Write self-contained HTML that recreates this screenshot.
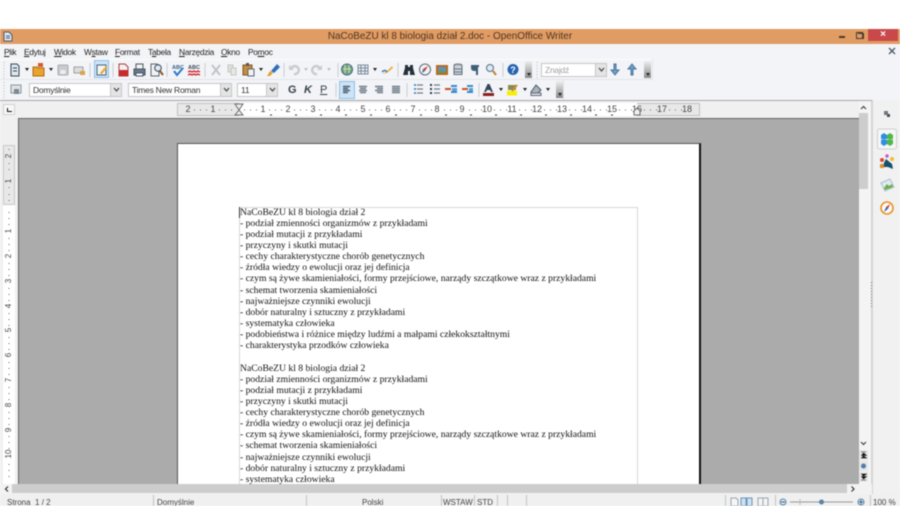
<!DOCTYPE html>
<html lang="pl"><head><meta charset="utf-8"><title>OpenOffice Writer</title>
<style>
html,body{margin:0;padding:0;background:#fff}
#a{position:relative;width:900px;height:506px;overflow:hidden;background:#fff;font:9px "Liberation Sans",sans-serif;color:#333;filter:blur(.45px)}
#a div,#a span,#a svg{position:absolute}
.m{top:47px;font-size:8.4px;letter-spacing:-.3px;line-height:10px;color:#222;white-space:nowrap}
.m u{text-decoration:underline}
.c{background:#fff;border:1px solid #c6c6c6;box-sizing:border-box;font-size:8.5px;letter-spacing:-.25px;line-height:12px;padding-left:3px;color:#333}
.b{background:#e4e4e4;width:11px;border-left:1px solid #c6c6c6;top:0;bottom:0;right:0;box-sizing:border-box}
.d{width:0;height:0;border:2px solid transparent;border-top:3px solid #222;border-bottom:0}
.r{top:104px;width:12px;text-align:center;font-size:9px;line-height:11px;color:#444}
.v{left:3px;width:12px;height:12px;text-align:center;font-size:8px;line-height:12px;color:#444;transform:rotate(-90deg)}
.t{left:240px;font:9.64px/11px "Liberation Serif",serif;color:#111;white-space:nowrap}
.st{top:498px;font-size:8px;line-height:10px;color:#444;white-space:nowrap}
.ss{top:495px;height:11px;width:1px;background:#c4c4c4}
</style></head><body><div id="a">

<div style="left:0;top:29px;width:900px;height:15px;background:#e09c63"></div>
<svg style="left:3px;top:31px" width="10" height="11" viewBox="0 0 10 11"><path d="M1 1h5l3 3v6H1z" fill="#dfe6ee" stroke="#4a5a6c"/><path d="M3 5h4M3 7h4" stroke="#4a5a6c"/></svg>
<div style="left:200px;width:500px;top:30px;text-align:center;font-size:9.95px;line-height:14px;color:#4e3626">NaCoBeZU kl 8 biologia dział 2.doc - OpenOffice Writer</div>
<div style="left:839px;top:36px;width:6px;height:2px;background:#4a3a2e"></div>
<div style="left:856px;top:32px;width:5px;height:5px;border:1px solid #4a3a2e"></div>
<div style="left:858px;top:33px;width:5px;height:5px;border:1px solid #4a3a2e;border-left:0;border-bottom:0"></div>
<div style="left:868px;top:29px;width:30px;height:12px;background:#c9494b"></div>
<div style="left:868px;top:29px;width:30px;text-align:center;font-size:10px;line-height:12px;color:#fff;font-weight:bold">×</div>

<div style="left:0;top:44px;width:900px;height:56px;background:#f3f4f7"></div>
<div style="left:0;top:59px;width:652px;height:1px;background:#fafbfc"></div>
<div style="left:0;top:79px;width:653px;height:1px;background:#e2e4e8"></div>
<div style="left:652px;top:59px;width:1px;height:21px;background:#e2e4e8"></div>
<div style="left:563px;top:80px;width:1px;height:20px;background:#e2e4e8"></div>
<div class="m" style="left:4px"><u>P</u>lik</div>
<div class="m" style="left:24px"><u>E</u>dytuj</div>
<div class="m" style="left:54px"><u>W</u>idok</div>
<div class="m" style="left:84px">W<u>s</u>taw</div>
<div class="m" style="left:115px"><u>F</u>ormat</div>
<div class="m" style="left:148px">T<u>a</u>bela</div>
<div class="m" style="left:179px"><u>N</u>arzędzia</div>
<div class="m" style="left:221px"><u>O</u>kno</div>
<div class="m" style="left:248px">Po<u>m</u>oc</div>
<svg style="left:888px;top:47px" width="8" height="8" viewBox="0 0 8 8"><path d="M1 1l6 6M7 1L1 7" stroke="#4c5a68" stroke-width="1.3"/></svg>

<!-- toolbar 1 -->
<div style="left:94px;top:60px;width:15px;height:18px;background:#cde4f7;border:1px solid #8fc0ea;box-sizing:border-box"></div>
<svg style="left:0;top:59px" width="660" height="21" viewBox="0 59 660 21">
<path d="M4 62v16" stroke="#bbb" stroke-dasharray="1 2"/>
<path d="M11 64h6l2 2v10h-8z" fill="#dfe6ec" stroke="#34465a"/><path d="M13 68h4M13 71h4" stroke="#34465a"/>
<path d="M25 68h4l-2 3z" fill="#222"/>
<path d="M33 67h4l1 1h6v8H33z" fill="#e8a52e" stroke="#b06a14"/><path d="M38 63h5v4h-5z" fill="#d95a2a"/>
<path d="M49 68h4l-2 3z" fill="#222"/>
<rect x="58" y="65" width="10" height="10" rx="1" fill="#c8ccd0" stroke="#a8acb0"/><rect x="60.500" y="70" width="5" height="4" fill="#eee"/>
<path d="M74 67h9v6h-9z" fill="#dcdcdc" stroke="#a0a0a0"/><path d="M80 71h5v4h-5z" fill="#d9a44a"/>
<path d="M90 63v14" stroke="#c8ccd2"/>
<path d="M97 65h9v10h-9z" fill="#f4f4f0" stroke="#4a5f78"/><path d="M100 73l6-7 1.500 1.500-6 7z" fill="#e6a834"/>
<path d="M113 63v14" stroke="#c8ccd2"/>
<path d="M119 64h6l3 3v9h-9z" fill="#f4f0f0" stroke="#a04040"/><rect x="119" y="70" width="9" height="6" fill="#c9282c"/>
<path d="M134 69h11v6h-11z" fill="#68788a" stroke="#44515f"/><path d="M136 64h7v5h-7z" fill="#f2f2f2" stroke="#4b5866"/><path d="M136 73h7v3h-7z" fill="#fff" stroke="#4b5866"/>
<path d="M151 64h6l2 2v10h-8z" fill="#f2f2f2" stroke="#5a6672"/><circle cx="158" cy="68" r="3.300" fill="#dceaf5" stroke="#345"/><path d="M160 71l3 4" stroke="#8a5a2a" stroke-width="2"/>
<path d="M167 63v14" stroke="#c8ccd2"/>
<text x="172" y="69" font-size="5.500" font-weight="700" fill="#3b5f86" font-family="Liberation Sans">ABC</text><path d="M174 71l3 4 6-7" fill="none" stroke="#2b7ec8" stroke-width="2"/>
<text x="188" y="69" font-size="5.500" font-weight="700" fill="#3b4a5a" font-family="Liberation Sans">ABC</text><path d="M188 72l2-1 2 1 2-1 2 1 2-1 2 1M188 75l2-1 2 1 2-1 2 1 2-1 2 1" fill="none" stroke="#d3282c" stroke-width="1.300"/>
<path d="M205 63v14" stroke="#c8ccd2"/>
<path d="M212 65l8 10M220 65l-8 10" stroke="#c0c4c8" stroke-width="2"/>
<path d="M228 65h5v7h-5z" fill="#e0e0dc" stroke="#c4c4c0"/><path d="M231 68h5v7h-5z" fill="#e8e8e4" stroke="#c4c4c0"/>
<path d="M243 65h9v10h-9z" fill="#c88c3a" stroke="#7a5a2a"/><path d="M246 63h3v3h-3z" fill="#556"/><path d="M248 69h6v7h-6z" fill="#f2f2f2" stroke="#5a6672"/>
<path d="M259 68h4l-2 3z" fill="#222"/>
<path d="M267 76l3-5 3 2-3 3z" fill="#e8a030"/><path d="M271 71l6-7 3 3-6 6z" fill="#2e70b8"/>
<path d="M284 63v14" stroke="#c8ccd2"/>
<path d="M291 69a4 4 0 1 1 3 5" fill="none" stroke="#c8ccd0" stroke-width="2.500"/><path d="M289 65v5h5z" fill="#c8ccd0"/>
<path d="M304 68h4l-2 3z" fill="#c0c0c0"/>
<path d="M320 69a4 4 0 1 0-3 5" fill="none" stroke="#c8ccd0" stroke-width="2.500"/><path d="M322 65v5h-5z" fill="#c8ccd0"/>
<path d="M327 68h4l-2 3z" fill="#c0c0c0"/>
<path d="M338 63v14" stroke="#c8ccd2"/>
<circle cx="347" cy="69.500" r="5.500" fill="#72a67e" stroke="#3f6f8c"/><path d="M343 69h8M345 65v8M349 65v8" stroke="#d8d8b8"/>
<rect x="358" y="65" width="10" height="9" fill="#e8edf2" stroke="#7c8c9c"/><path d="M358 68h10M358 71h10M361 65v9M365 65v9" stroke="#7c8c9c"/>
<path d="M373 68h4l-2 3z" fill="#222"/>
<path d="M382 74l4-2 6-6 1 2-6 5z" fill="#e8b04a"/><path d="M382 72q3-3 5 0" fill="none" stroke="#3a7abf" stroke-width="1.500"/>
<path d="M398 63v14" stroke="#c8ccd2"/>
<path d="M405 65h3v2h2v-2h3v3l2 7h-5v-4h-2v4h-5l2-7z" fill="#26303a"/>
<circle cx="425" cy="69.500" r="5.500" fill="#f2f2f2" stroke="#5a6a78"/><path d="M428 66l-5 3 2 2z" fill="#d3382c"/><path d="M422 73l1-4 2 2z" fill="#2e70b8"/>
<rect x="436" y="65" width="12" height="10" fill="#b96a22"/><rect x="438" y="67" width="8" height="6" fill="#5a94b8"/><path d="M438 73l3-3 2 2 3-1v2z" fill="#6a9a3a"/>
<ellipse cx="458" cy="65.500" rx="4" ry="1.500" fill="#bbb" stroke="#607080"/><path d="M454 66v8.500h8V66" fill="#cfd3d8" stroke="#607080"/><path d="M454 69h8M454 72h8" stroke="#607080"/>
<path d="M471 65h8v2h-1v8h-2v-4h-1q-4 0-4-3 0-3 0-3z" fill="#3d6078"/>
<circle cx="490" cy="68" r="3.500" fill="#dceaf5" stroke="#5a7080"/><path d="M493 71l3 4" stroke="#b8863a" stroke-width="2"/>
<path d="M503 63v14" stroke="#c8ccd2"/>
<circle cx="513" cy="69.500" r="5.500" fill="#2762b0"/>
<text x="513" y="73" font-size="9" font-weight="700" fill="#fff" text-anchor="middle" font-family="Liberation Sans">?</text>
<path d="M537 62v16" stroke="#bbb" stroke-dasharray="1 2"/>
<path d="M614 64v6h-3l4 5 4-5h-3v-6z" fill="#6ea0c8" stroke="#47759c"/>
<path d="M631 75v-6h-3l4-5 4 5h-3v6z" fill="#6ea0c8" stroke="#47759c"/>
</svg>
<div style="left:525px;top:61px;width:7px;height:17px;background:linear-gradient(#eceef0,#8a8a8a)"></div>
<div class="d" style="left:527px;top:73px"></div>
<div style="left:644px;top:61px;width:7px;height:17px;background:linear-gradient(#eceef0,#8a8a8a)"></div>
<div class="d" style="left:646px;top:73px"></div>
<div class="c" style="left:541px;top:63px;width:66px;height:14px;color:#a0a0a0">Znajdź<div class="b"><svg style="left:2px;top:3px" width="7" height="6"><path d="M1 1l2.500 3L6 1" fill="none" stroke="#444" stroke-width="1.200"/></svg></div></div>

<!-- toolbar 2 -->
<div style="left:339px;top:81px;width:16px;height:18px;background:#cde4f7;border:1px solid #8fc0ea;box-sizing:border-box"></div>
<div class="c" style="left:29px;top:83px;width:93px;height:14px">Domyślnie<div class="b"><svg style="left:2px;top:3px" width="7" height="6"><path d="M1 1l2.500 3L6 1" fill="none" stroke="#444" stroke-width="1.200"/></svg></div></div>
<div class="c" style="left:128px;top:83px;width:104px;height:14px">Times New Roman<div class="b"><svg style="left:2px;top:3px" width="7" height="6"><path d="M1 1l2.500 3L6 1" fill="none" stroke="#444" stroke-width="1.200"/></svg></div></div>
<div class="c" style="left:237px;top:83px;width:41px;height:14px">11<div class="b"><svg style="left:2px;top:3px" width="7" height="6"><path d="M1 1l2.500 3L6 1" fill="none" stroke="#444" stroke-width="1.200"/></svg></div></div>
<div style="left:288px;top:84px;font-size:11px;line-height:12px;font-weight:700;color:#36414c">G</div>
<div style="left:304px;top:84px;font-size:11px;line-height:12px;font-weight:700;font-style:italic;color:#36414c">K</div>
<div style="left:320px;top:84px;font-size:11px;line-height:12px;color:#36414c;text-decoration:underline">P</div>
<svg style="left:0;top:80px" width="570" height="20" viewBox="0 80 570 20">
<path d="M4 82v16" stroke="#bbb" stroke-dasharray="1 2"/>
<rect x="11" y="85" width="10" height="8" fill="#dfe3e6" stroke="#88949e"/><rect x="14" y="89" width="5" height="5" fill="#7c8a90"/>
<path d="M336 83v14M407 83v14M479 83v14" stroke="#c8ccd2"/>
<path d="M343 86.500h7M343 88.500h5M343 90.500h7M343 92.500h5" stroke="#4d6070" stroke-width="1.500"/>
<path d="M359 86.500h8M360 88.500h6M359 90.500h8M360 92.500h6" stroke="#707c88" stroke-width="1.500"/>
<path d="M375 86.500h8M377 88.500h6M375 90.500h8M377 92.500h6" stroke="#707c88" stroke-width="1.500"/>
<path d="M392 86.500h8M392 88.500h8M392 90.500h8M392 92.500h8" stroke="#707c88" stroke-width="1.500"/>
<path d="M414 85h2M414 89h2M414 93h2" stroke="#2e70b8" stroke-width="1.600"/><path d="M417 85h6M417 89h6M417 93h6" stroke="#707c88" stroke-width="1.200"/>
<path d="M430 85h2M430 89h2M430 93h2" stroke="#2c3a48" stroke-width="2"/><path d="M434 85h6M434 89h6M434 93h6" stroke="#707c88" stroke-width="1.200"/>
<path d="M451 86h6M451 92h6" stroke="#3a8ac8" stroke-width="2"/><path d="M445 89h6" stroke="#c8502c" stroke-width="2"/><path d="M452 88h5v3h-5z" fill="#5aa0d8"/>
<path d="M467 86h6M467 92h6" stroke="#3a8ac8" stroke-width="2"/><path d="M462 89h6" stroke="#c8502c" stroke-width="2"/><path d="M469 88h4v3h-4z" fill="#5aa0d8"/>
<path d="M484 92l3.500-8h2l3.500 8h-2l-1-2h-3l-1 2z" fill="#33465c"/><rect x="483" y="93" width="11" height="3" fill="#8e1f1f"/>
<path d="M499 88h4l-2 3z" fill="#222"/>
<rect x="507" y="91" width="10" height="4.500" fill="#f4f000"/><path d="M508 85h8v5h-8z" fill="#8a8a50"/><path d="M512 91l5-6" stroke="#c88a30" stroke-width="2"/>
<path d="M523 88h4l-2 3z" fill="#222"/>
<path d="M531 92l5-7 5 5-3 3h-6z" fill="#a8b4bc" stroke="#4a5a68"/><rect x="531" y="93" width="10" height="2.500" fill="#dde2e6" stroke="#667"/>
<path d="M546 88h4l-2 3z" fill="#222"/>
</svg>
<div style="left:556px;top:81px;width:7px;height:17px;background:linear-gradient(#eceef0,#8a8a8a)"></div>
<div class="d" style="left:558px;top:93px"></div>

<!-- ruler region -->
<div style="left:0;top:100px;width:872px;height:384px;background:#f0f0f0;border-top:1px solid #a8a8a8;box-sizing:border-box"></div>
<div style="left:3px;top:104px;width:12px;height:11px;background:#f8f8f8;border:1px solid #d0d0d0;box-sizing:border-box"></div>
<div style="left:7px;top:108px;width:4px;height:3px;border-left:1px solid #111;border-bottom:1px solid #111"></div>
<div style="left:177px;top:103px;width:523px;height:13px;background:#e8e8e8;border:1px solid #c0c0c0;box-sizing:border-box"></div>
<div style="left:239px;top:103px;width:398px;height:13px;background:#fff"></div>
<div class="r" style="left:182px">2</div><div class="r" style="left:207px">1</div><div class="r" style="left:257px">1</div><div class="r" style="left:282px">2</div><div class="r" style="left:307px">3</div><div class="r" style="left:332px">4</div><div class="r" style="left:357px">5</div><div class="r" style="left:382px">6</div><div class="r" style="left:407px">7</div><div class="r" style="left:431px">8</div><div class="r" style="left:456px">9</div><div class="r" style="left:481px">10</div><div class="r" style="left:506px">11</div><div class="r" style="left:531px">12</div><div class="r" style="left:556px">13</div><div class="r" style="left:581px">14</div><div class="r" style="left:606px">15</div><div class="r" style="left:631px">16</div><div class="r" style="left:656px">17</div><div class="r" style="left:681px">18</div>
<svg style="left:177px;top:103px" width="523" height="14" viewBox="177 103 523 14">
<path d="M194 110h1M200 110h1M206 110h1M219 110h1M225 110h1M231 110h1M244 110h1M250 110h1M256 110h1M269 110h1M275 110h1M281 110h1M294 110h1M300 110h1M306 110h1M319 110h1M325 110h1M331 110h1M344 110h1M350 110h1M356 110h1M369 110h1M375 110h1M381 110h1M394 110h1M400 110h1M406 110h1M419 110h1M425 110h1M431 110h1M444 110h1M450 110h1M456 110h1M469 110h1M475 110h1M481 110h1M494 110h1M500 110h1M506 110h1M519 110h1M525 110h1M531 110h1M544 110h1M550 110h1M556 110h1M569 110h1M575 110h1M581 110h1M594 110h1M600 110h1M606 110h1M619 110h1M625 110h1M631 110h1M644 110h1M650 110h1M656 110h1M669 110h1M675 110h1M681 110h1" stroke="#666"/>
<path d="M270 115h2M295 115h2M320 115h2M345 115h2M370 115h2M395 115h2M420 115h2M445 115h2M470 115h2M495 115h2M520 115h2M545 115h2M570 115h2M595 115h2M611 115h2" stroke="#333"/>
<path d="M235 104h8l-4 6zM235 115h8l-4-5z" fill="#eee" stroke="#6c6c6c"/>
<path d="M634 115v-4l3-3 3 3v4z" fill="#f0f0f0" stroke="#6c6c6c"/>
</svg>

<!-- vertical ruler -->
<div style="left:3px;top:145px;width:12px;height:60px;background:#e8e8e8;border:1px solid #c8c8c8;box-sizing:border-box"></div>
<div style="left:3px;top:205px;width:12px;height:279px;background:#fff"></div>
<div class="v" style="top:150px">2</div><div class="v" style="top:175px">1</div><div class="v" style="top:225px">1</div><div class="v" style="top:250px">2</div><div class="v" style="top:275px">3</div><div class="v" style="top:300px">4</div><div class="v" style="top:324px">5</div><div class="v" style="top:349px">6</div><div class="v" style="top:374px">7</div><div class="v" style="top:399px">8</div><div class="v" style="top:424px">9</div><div class="v" style="top:448px">10</div>
<svg style="left:3px;top:145px" width="12" height="339" viewBox="3 145 12 339"><path d="M9 149v1M9 163v1M9 169v1M9 187v1M9 194v1M9 200v1M9 212v1M9 218v1M9 224v1M9 238v1M9 244v1M9 250v1M9 263v1M9 269v1M9 275v1M9 288v1M9 294v1M9 300v1M9 313v1M9 319v1M9 325v1M9 337v1M9 343v1M9 349v1M9 362v1M9 368v1M9 374v1M9 387v1M9 393v1M9 399v1M9 412v1M9 418v1M9 424v1M9 436v1M9 442v1M9 448v1M9 464v1M9 470v1M9 476v1" stroke="#666"/></svg>

<!-- doc -->
<div style="left:18px;top:118px;width:841px;height:366px;background:#ababab;border-left:1px solid #666;border-top:1px solid #666;box-sizing:border-box"></div>
<div style="left:177px;top:143px;width:524px;height:341px;background:#fff;border-left:1px solid #555;border-top:1px solid #555;border-right:2px solid #111;box-sizing:border-box"></div>
<div style="left:239px;top:207px;width:399px;height:277px;border:1px solid #d8d8d8;border-bottom:0;box-sizing:border-box"></div>
<div style="left:239px;top:207px;width:1px;height:11px;background:#333"></div>

<div class="t" style="top:207px">NaCoBeZU kl 8 biologia dział 2</div>
<div class="t" style="top:218px">- podział zmienności organizmów z przykładami</div>
<div class="t" style="top:229px">- podział mutacji z przykładami</div>
<div class="t" style="top:240px">- przyczyny i skutki mutacji</div>
<div class="t" style="top:251px">- cechy charakterystyczne chorób genetycznych</div>
<div class="t" style="top:262px">- źródła wiedzy o ewolucji oraz jej definicja</div>
<div class="t" style="top:273px">- czym są żywe skamieniałości, formy przejściowe, narządy szczątkowe wraz z przykładami</div>
<div class="t" style="top:285px">- schemat tworzenia skamieniałości</div>
<div class="t" style="top:296px">- najważniejsze czynniki ewolucji</div>
<div class="t" style="top:307px">- dobór naturalny i sztuczny z przykładami</div>
<div class="t" style="top:318px">- systematyka człowieka</div>
<div class="t" style="top:329px">- podobieństwa i różnice między ludźmi a małpami człekokształtnymi</div>
<div class="t" style="top:340px">- charakterystyka przodków człowieka</div>
<div class="t" style="top:363px">NaCoBeZU kl 8 biologia dział 2</div>
<div class="t" style="top:374px">- podział zmienności organizmów z przykładami</div>
<div class="t" style="top:385px">- podział mutacji z przykładami</div>
<div class="t" style="top:396px">- przyczyny i skutki mutacji</div>
<div class="t" style="top:407px">- cechy charakterystyczne chorób genetycznych</div>
<div class="t" style="top:418px">- źródła wiedzy o ewolucji oraz jej definicja</div>
<div class="t" style="top:429px">- czym są żywe skamieniałości, formy przejściowe, narządy szczątkowe wraz z przykładami</div>
<div class="t" style="top:440px">- schemat tworzenia skamieniałości</div>
<div class="t" style="top:452px">- najważniejsze czynniki ewolucji</div>
<div class="t" style="top:463px">- dobór naturalny i sztuczny z przykładami</div>
<div class="t" style="top:474px;height:10px;overflow:hidden">- systematyka człowieka</div>

<!-- v scrollbar -->
<div style="left:859px;top:101px;width:13px;height:383px;background:#f4f4f4;border-right:1px solid #d4d4d4;box-sizing:border-box"></div>
<div style="left:859px;top:113px;width:9px;height:76px;background:#cdcdcd"></div>
<svg style="left:859px;top:103px" width="12" height="380" viewBox="859 103 12 380">
<path d="M861 109l2.500-2.500 2.500 2.500" fill="none" stroke="#444" stroke-width="1.200"/>
<path d="M861 442l2.500 2.500 2.500-2.500" fill="none" stroke="#444" stroke-width="1.200"/>
<rect x="859" y="450" width="9" height="10" fill="#e6e6e6"/><rect x="859" y="461" width="9" height="10" fill="#e6e6e6"/><rect x="859" y="472" width="9" height="10" fill="#e6e6e6"/>
<path d="M861 452h5M863.500 453l-2 2.500h5zM863.500 456l-2 2h5z" fill="#111" stroke="#111" stroke-width=".6"/>
<circle cx="863.500" cy="466" r="2.500" fill="#4f7fa8"/>
<path d="M861 480h5M863.500 479l-2-2.500h5zM863.500 476l-2-2h5z" fill="#111" stroke="#111" stroke-width=".6"/>
</svg>

<!-- sidebar -->
<div style="left:872px;top:100px;width:28px;height:394px;background:#f1f1f1;border-left:1px solid #d4d4d4;box-sizing:border-box"></div>
<svg style="left:870px;top:280px" width="4" height="30"><path d="M1.500 2v26" stroke="#777" stroke-dasharray="1 2"/></svg>
<svg style="left:873px;top:105px" width="27" height="115" viewBox="873 105 27 115">
<path d="M884 111h4v4h-4z" fill="#707880"/><path d="M887 114h3v3h-3z" fill="#4a5058"/>
<rect x="877.500" y="129" width="19" height="20" rx="2" fill="#f6f6f6" stroke="#cfcfcf"/>
<path d="M881 135l3-2 3 2v4h-6z" fill="#2f8fe0"/><path d="M887 135l3-2 3 2v4h-6z" fill="#4eb848"/><path d="M881 140l3-1 3 1v4l-3 2-3-2z" fill="#2f8fe0"/><path d="M887 140l3-1 3 1v4l-3 2-3-2z" fill="#4eb848"/>
<circle cx="882" cy="160" r="2" fill="#d84a30"/><circle cx="887" cy="156" r="1.700" fill="#c05ad0"/><circle cx="892" cy="159" r="2" fill="#eec030"/>
<path d="M882 167l4-8 6 5 1 5-5-2z" fill="#14506c"/><path d="M880 164h4v4h-4z" fill="#d89030"/>
<path d="M881 183l9-4 4 8-9 4z" fill="#dfeaf2" stroke="#a8c0d0"/><path d="M884 188l3-4 2 2 3-2 1 3-8 3z" fill="#6ab04a"/>
<circle cx="887" cy="208" r="6" fill="#fbfbfb" stroke="#ea9320" stroke-width="1.600"/><path d="M890 204l-4 3 2 2z" fill="#d8382c"/><path d="M884 212l2-5 2 2z" fill="#2e70b8"/>
</svg>

<!-- h scrollbar -->
<div style="left:0;top:484px;width:872px;height:10px;background:#f2f2f2"></div>
<div style="left:12px;top:484px;width:835px;height:9px;background:#cdcdcd"></div>
<svg style="left:3px;top:485px" width="10" height="8"><path d="M5 1.500L2.500 4 5 6.500" fill="none" stroke="#333" stroke-width="1.200"/></svg>
<svg style="left:849px;top:485px" width="10" height="8"><path d="M2.500 1.500L5 4 2.500 6.500" fill="none" stroke="#333" stroke-width="1.200"/></svg>

<!-- status -->
<div style="left:0;top:494px;width:900px;height:12px;background:#f0f0f0"></div>
<div class="st" style="left:7px">Strona&nbsp; 1 / 2</div>
<div class="ss" style="left:153px"></div>
<div class="st" style="left:157px">Domyślnie</div>
<div class="ss" style="left:306px"></div>
<div class="st" style="left:362px">Polski</div>
<div class="ss" style="left:441px"></div>
<div class="st" style="left:443px">WSTAW</div>
<div class="ss" style="left:474px"></div>
<div class="st" style="left:477px">STD</div>
<div class="ss" style="left:497px"></div>
<div class="ss" style="left:507px"></div>
<div class="ss" style="left:526px"></div>
<div class="ss" style="left:725px"></div>
<div class="ss" style="left:775px"></div>
<div class="ss" style="left:870px"></div>
<svg style="left:728px;top:495px" width="140" height="11" viewBox="728 495 140 11">
<path d="M731 498h5l2 2v6h-7z" fill="#f6f6f6" stroke="#9aa4ae"/>
<path d="M741 498h5v8h-5zM747 498h5v8h-5z" fill="#cfe2f3" stroke="#6c94ba"/>
<path d="M758 498h5v8h-5zM763 498h5v8h-5z" fill="#f4f4f4" stroke="#9aa4ae"/>
<circle cx="783" cy="502" r="3" fill="#dce8f2" stroke="#5c83a8"/><path d="M781 502h4" stroke="#3c5e80"/>
<path d="M790 502h63" stroke="#999"/><path d="M800 499v6" stroke="#bbb"/>
<circle cx="821.500" cy="502" r="2.500" fill="#5c83a8"/>
<circle cx="861" cy="502" r="3" fill="#dce8f2" stroke="#5c83a8"/><path d="M859 502h4M861 500v4" stroke="#3c5e80"/>
</svg>
<div class="st" style="left:873px">100 %</div>
</div></body></html>
